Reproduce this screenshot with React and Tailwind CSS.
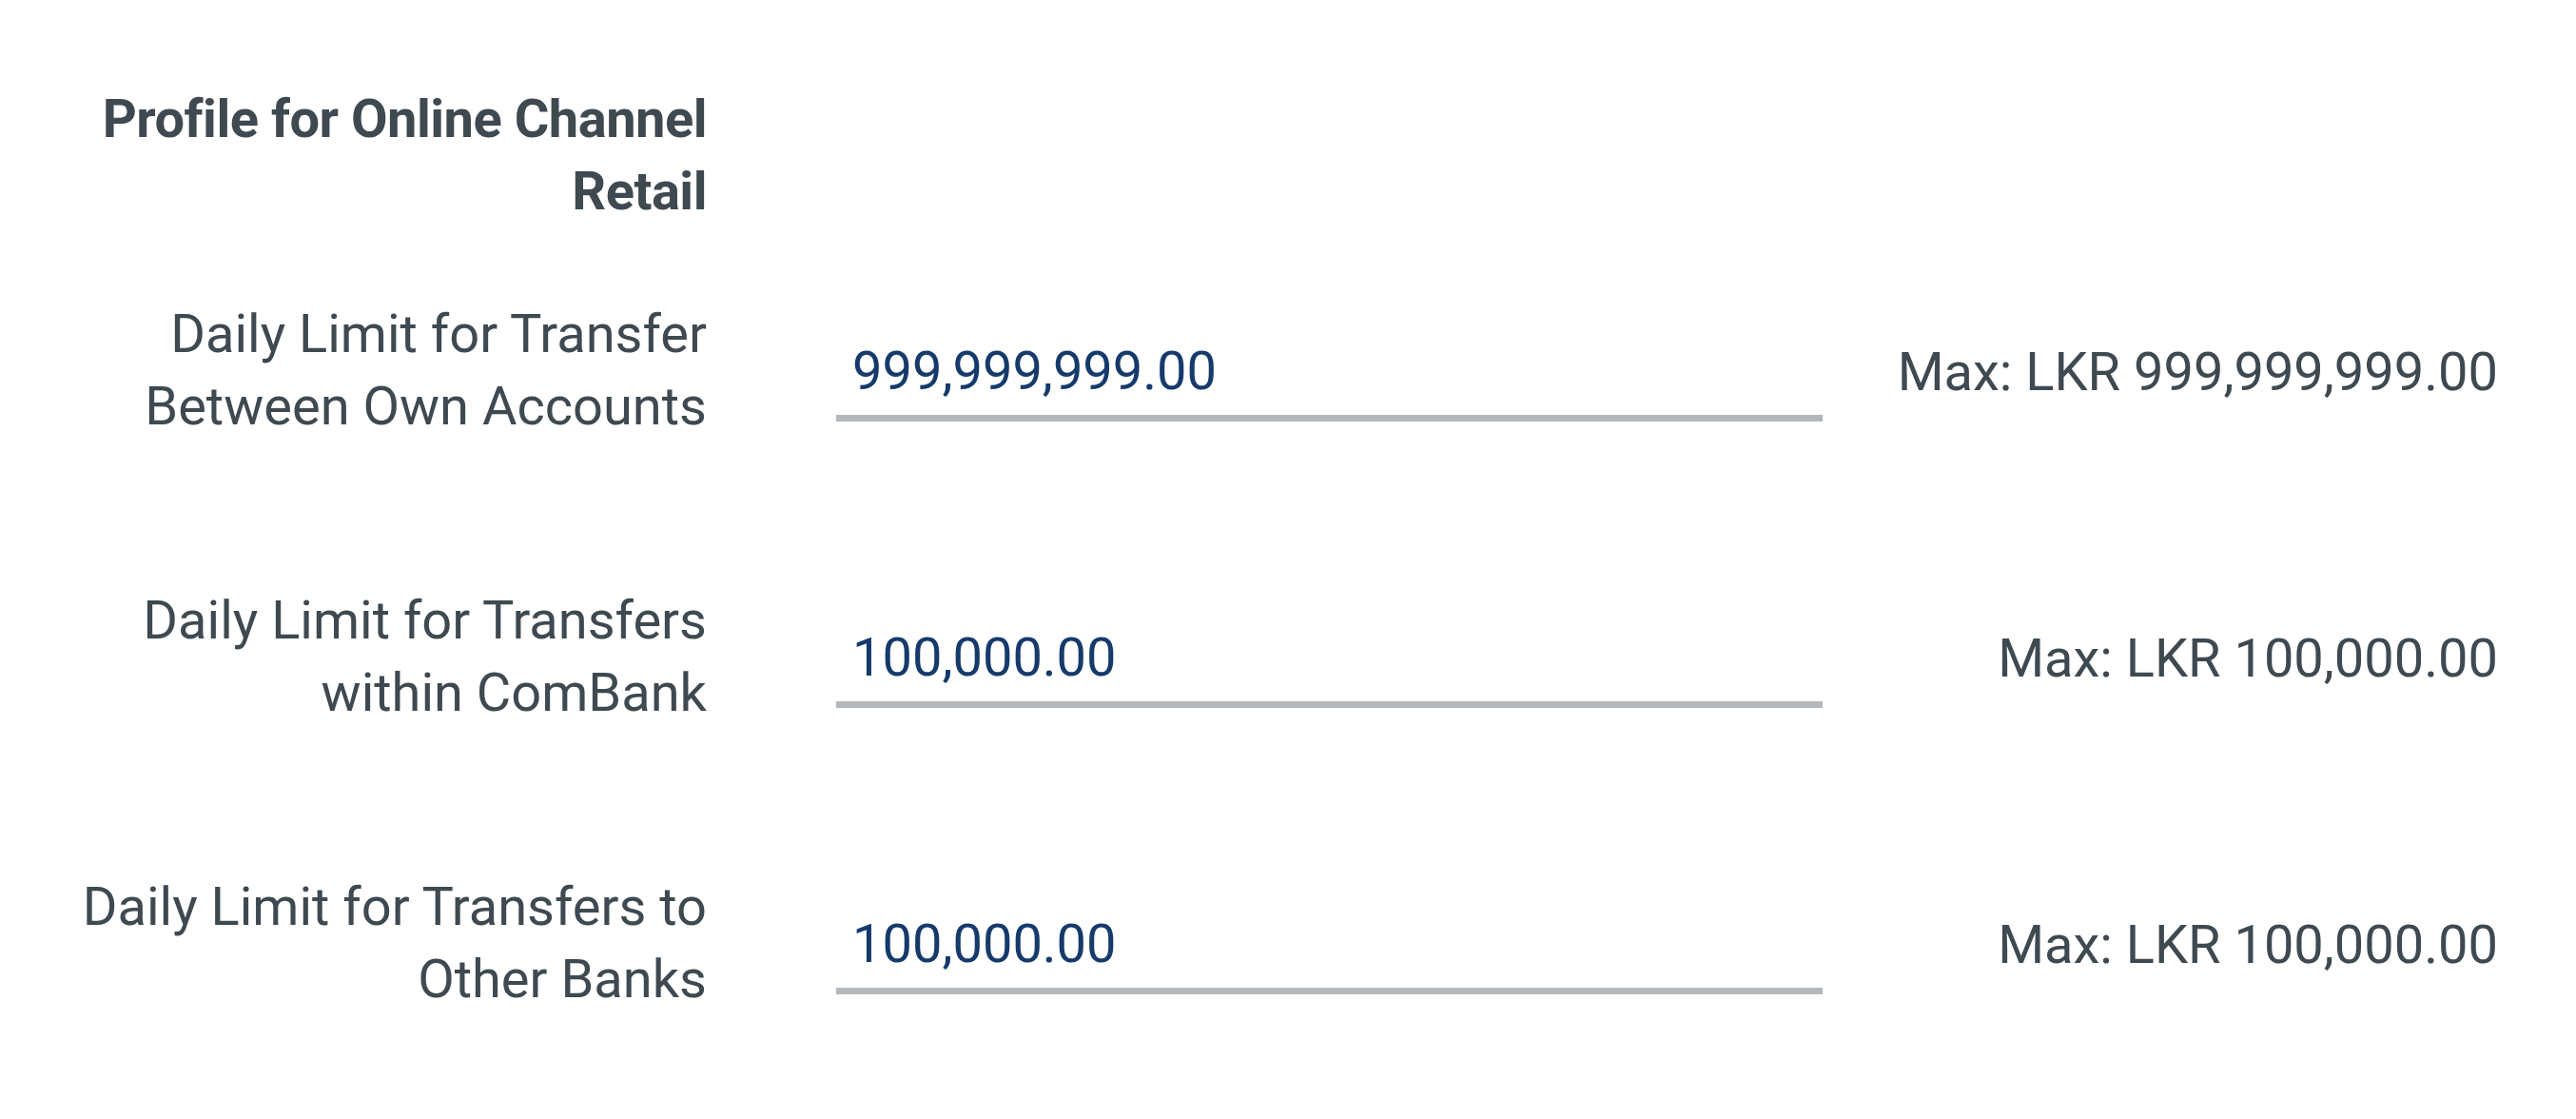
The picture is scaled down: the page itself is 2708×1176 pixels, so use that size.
import { useState } from "react";

const limits = [
  {
    id: "own",
    label: ["Daily Limit for Transfer", "Between Own Accounts"],
    value: "999,999,999.00",
    max: "Max: LKR 999,999,999.00",
  },
  {
    id: "combank",
    label: ["Daily Limit for Transfers", "within ComBank"],
    value: "100,000.00",
    max: "Max: LKR 100,000.00",
  },
  {
    id: "other",
    label: ["Daily Limit for Transfers to", "Other Banks"],
    value: "100,000.00",
    max: "Max: LKR 100,000.00",
  },
];

function LimitRow({ item }) {
  const [value, setValue] = useState(item.value);

  return (
    <div className="flex items-center">
      {/* Label column */}
      <div className="w-[743px] shrink-0 pl-[40px] text-right">
        {item.label[0]}
        <br />
        {item.label[1]}
      </div>

      {/* Amount input */}
      <div className="ml-[136px] w-[1037px] shrink-0 border-b-[7px] border-[#b4b8bb] pt-[17px] pb-[8px]">
        <input
          type="text"
          value={value}
          onChange={(e) => setValue(e.target.value)}
          className="w-full bg-transparent pl-[17px] text-[#153a6b] outline-none"
        />
      </div>

      {/* Max amount */}
      <div className="flex-1 pt-[4px] pr-[82px] text-right">{item.max}</div>
    </div>
  );
}

export default function App() {
  return (
    <div
      className="min-h-screen bg-white pt-[88px] text-[56px] leading-[75.5px] text-[#3e4950]"
      style={{ fontFamily: "Roboto, 'Liberation Sans', sans-serif" }}
    >
      <div className="w-[743px] pl-[40px] text-right font-bold tracking-[-0.5px]">
        Profile for Online Channel
        <br />
        Retail
      </div>

      <div className="mt-[75px] flex flex-col gap-[150px]">
        {limits.map((item) => (
          <LimitRow key={item.id} item={item} />
        ))}
      </div>
    </div>
  );
}
